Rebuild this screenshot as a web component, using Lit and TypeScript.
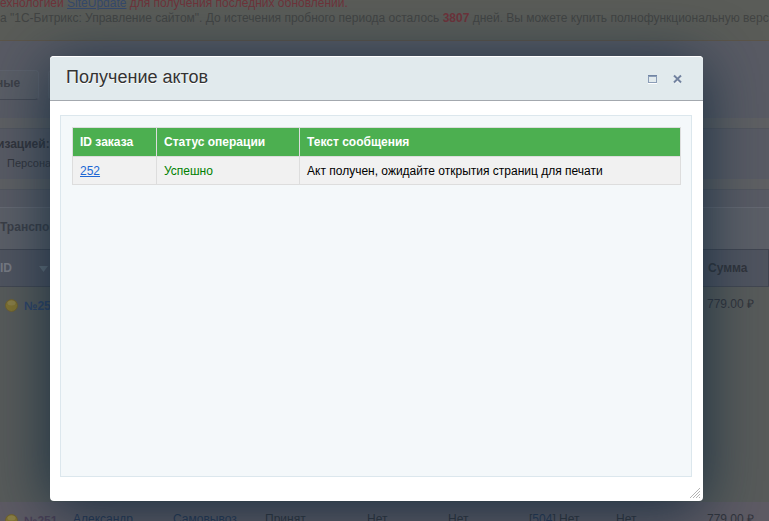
import { LitElement, html, css } from "lit";
import { customElement } from "lit/decorators.js";

interface Act {
  id: string;
  status: string;
  message: string;
}

@customElement("acts-dialog")
class ActsDialog extends LitElement {
  static styles = css`
    :host {
      display: flex;
      flex-direction: column;
      box-sizing: border-box;
      border-radius: 4px;
      background: #fff;
      box-shadow: 0 8px 60px rgba(16, 40, 60, 0.9);
      position: relative;
      font: 12px/14px "Liberation Sans", Arial, sans-serif;
      color: #000;
    }
    .head {
      display: flex;
      align-items: center;
      height: 43px;
      padding: 0 20px 0 16px;
      background: #e1eaed;
      border-top: 1px solid #fff;
      border-bottom: 1px solid #a3a8ae;
      border-radius: 4px 4px 0 0;
    }
    h1 {
      flex: 1;
      margin: 0 0 4px;
      font: 18px/22px "Liberation Sans", Arial, sans-serif;
      color: #333;
      text-shadow: 0 1px #fff;
    }
    .tool {
      display: grid;
      width: 10px;
      height: 10px;
      margin-left: 15px;
      padding: 0;
      border: 0;
      background: none;
    }
    .body {
      flex: 1;
      display: flex;
      padding: 14px 11px 24px 10px;
    }
    .panel {
      flex: 1;
      padding: 11px 10px 11px 11px;
      background: #f4f8fa;
      border: 1px solid #dce7ed;
    }
    table {
      width: 100%;
      border-collapse: collapse;
      table-layout: fixed;
    }
    th,
    td {
      padding: 0 7px;
      border: 1px solid #ddd;
      text-align: left;
    }
    th {
      height: 28px;
      background: #4caf50;
      color: #fff;
    }
    td {
      height: 27px;
      background: #f1f1f1;
    }
    .c-id {
      width: 84px;
      box-sizing: border-box;
    }
    .c-status {
      width: 143px;
      box-sizing: border-box;
    }
    a {
      color: #2067d4;
    }
    .ok {
      color: #008000;
    }
    .grip {
      position: absolute;
      right: 3px;
      bottom: 3px;
    }
  `;

  acts: Act[] = [
    { id: "252", status: "Успешно", message: "Акт получен, ожидайте открытия страниц для печати" },
  ];

  render() {
    return html`
      <header class="head">
        <h1>Получение актов</h1>
        <button class="tool" aria-label="Развернуть">
          <svg width="10" height="10" viewBox="0 0 10 10" shape-rendering="crispEdges">
            <path d="M0 9h9v1H0z" fill="#fff" />
            <path d="M0 1h9v8H0zM1 3v5h7V3z" fill="#8b9db7" fill-rule="evenodd" />
            <path d="M0 1h9v1H0z" fill="#7185a4" />
          </svg>
        </button>
        <button class="tool" aria-label="Закрыть">
          <svg width="10" height="10" viewBox="0 0 10 10">
            <path d="M1.5 2.5l6 6.5M7.500 2.500l-6 6.500" stroke="#fff" stroke-width="2" />
            <path d="M1 1.500l7 7M8 1.500l-7 7" stroke="#71829f" stroke-width="2" />
          </svg>
        </button>
      </header>
      <div class="body">
        <div class="panel">
          <table>
            <thead>
              <tr>
                <th class="c-id">ID заказа</th>
                <th class="c-status">Статус операции</th>
                <th>Текст сообщения</th>
              </tr>
            </thead>
            <tbody>
              ${this.acts.map(
                (a) => html`<tr>
                  <td><a href="#">${a.id}</a></td>
                  <td class="ok">${a.status}</td>
                  <td>${a.message}</td>
                </tr>`
              )}
            </tbody>
          </table>
        </div>
      </div>
      <svg class="grip" width="10" height="10" viewBox="0 0 10 10">
        <path d="M0 10L10 0M3 10l7-7M6 10l4-4M9 10l1-1" stroke="#b4b4b4" stroke-width="1" />
      </svg>
    `;
  }
}

@customElement("app-root")
class AppRoot extends LitElement {
  static styles = css`
    :host {
      display: block;
      position: relative;
      height: 100vh;
      overflow: hidden;
      background: #595b64;
      font: 12px/15px "Liberation Sans", Arial, sans-serif;
      color: #32343b;
    }
    .notice {
      height: 45px;
      margin-top: -4px;
      box-sizing: border-box;
      background: #5a5c58;
      border-bottom: 1px solid #5c5549;
      color: #424443;
      white-space: nowrap;
      overflow: hidden;
    }
    .notice p {
      margin: 0;
    }
    .warn {
      color: #6e333a;
    }
    .notice a {
      color: #35496b;
    }
    .tabs {
      display: flex;
      gap: 9px;
      padding: 29px 0 18px;
    }
    .tab {
      height: 30px;
      box-sizing: border-box;
      margin-left: -4px;
      padding: 0 18px 4px 0;
      border: 1px solid #5f636d;
      border-left: 0;
      border-bottom-color: #474a54;
      border-radius: 0 4px 4px 0;
      background: #5b5e66;
      color: #3d3f46;
      font: bold 12px/15px "Liberation Sans", Arial, sans-serif;
    }
    .tab.next {
      width: 90px;
      margin-left: 0;
      border-left: 1px solid #5f636d;
      border-radius: 4px;
    }
    .band {
      height: 10px;
      background: #5f6063;
      border-bottom: 1px solid #53565e;
    }
    .filter {
      height: 50px;
      box-sizing: border-box;
      padding-top: 8px;
    }
    .filter h2 {
      margin: 0 0 4px -3px;
      font: bold 12px/15px "Liberation Sans", Arial, sans-serif;
    }
    .filter label {
      display: flex;
      align-items: center;
      gap: 7px;
      font-size: 11px;
    }
    .filter input {
      appearance: none;
      width: 13px;
      height: 13px;
      margin: 0 0 0 -13px;
      border: 1px solid #4d5059;
      border-radius: 2px;
    }
    .bar {
      height: 42px;
      box-sizing: border-box;
      margin-top: 17px;
      padding-top: 12px;
      border-top: 1px solid #666972;
      background: #5c5f67;
      color: #3b3e46;
      font-weight: bold;
    }
    .orders {
      width: 100%;
      border-collapse: collapse;
      table-layout: fixed;
      white-space: nowrap;
    }
    .orders th,
    .orders td {
      padding: 0;
      text-align: left;
      vertical-align: top;
    }
    .orders th {
      height: 36px;
      background: #50545f;
      border-top: 1px solid #414550;
      border-bottom: 1px solid #434751;
      vertical-align: middle;
      font-weight: bold;
    }
    .orders .id-head {
      color: #787b83;
    }
    .sort {
      margin-left: 27px;
    }
    .orders .last {
      padding-left: 1px;
      border-right: 1px solid #414550;
    }
    .orders td {
      height: 197px;
      padding-top: 10px;
      padding-bottom: 8px;
    }
    .first td {
      background: #585b5a;
    }
    .second td {
      background: #5e5b64;
    }
    .num {
      display: flex;
      align-items: center;
      gap: 6px;
      padding-left: 5px;
    }
    .num a {
      color: #2f4468;
      font-weight: bold;
      text-decoration: none;
      padding-top: 2px;
    }
    .second .num a {
      color: #4b4055;
    }
    .orders .link {
      color: #283854;
      text-decoration: none;
    }
    .w-id { width: 73px; }
    .w-name { width: 100px; }
    .w-ship { width: 92px; }
    .w-state { width: 102px; }
    .w-flag { width: 81px; }
    .w-pay { width: 87px; }
    .w-sys { width: 91px; }
    .layer {
      position: absolute;
      inset: 0;
      display: grid;
      padding: 56px 66px 20px 50px;
    }
  `;

  lamp() {
    return html`<svg width="13" height="13" viewBox="0 0 13 13">
      <circle cx="6.5" cy="6.5" r="6" fill="#80722f" stroke="#6e6031" />
      <ellipse cx="6.5" cy="4" rx="4" ry="2.5" fill="#8a7e45" />
    </svg>`;
  }

  render() {
    return html`
      <div class="notice">
        <p class="warn">ехнологией <a href="#">SiteUpdate</a> для получения последних обновлений.</p>
        <p>
          а "1С-Битрикс: Управление сайтом". До истечения пробного периода осталось
          <b class="warn">3807</b> дней. Вы можете купить полнофункциональную версию продукта
        </p>
      </div>
      <nav class="tabs">
        <button class="tab">ные</button>
        <button class="tab next" aria-label="Вкладка"></button>
      </nav>
      <div class="band"></div>
      <section class="filter">
        <h2>изацией:</h2>
        <label><input type="checkbox" />Персона</label>
      </section>
      <div class="band"></div>
      <div class="bar">Транспорт</div>
      <table class="orders">
        <colgroup>
          <col class="w-id" /><col class="w-name" /><col class="w-ship" /><col class="w-state" />
          <col class="w-flag" /><col class="w-flag" /><col class="w-pay" /><col class="w-sys" /><col />
        </colgroup>
        <thead>
          <tr>
            <th class="id-head">
              ID<svg class="sort" width="9" height="6" viewBox="0 0 9 6"><path d="M0 0h9L4.500 6z" fill="#68727c" /></svg>
            </th>
            <th colspan="7"></th>
            <th class="last">Сумма</th>
          </tr>
        </thead>
        <tbody>
          <tr class="first">
            <td><div class="num">${this.lamp()}<a href="#">№252</a></div></td>
            <td colspan="7"></td>
            <td>779.00 ₽</td>
          </tr>
          <tr class="second">
            <td><div class="num">${this.lamp()}<a href="#">№251</a></div></td>
            <td><a class="link" href="#">Александр</a></td>
            <td><a class="link" href="#">Самовывоз</a></td>
            <td>Принят</td>
            <td>Нет</td>
            <td>Нет</td>
            <td>[<a class="link" href="#">504</a>] Нет</td>
            <td>Нет</td>
            <td>779.00 ₽</td>
          </tr>
        </tbody>
      </table>
      <div class="layer"><acts-dialog role="dialog" aria-label="Получение актов"></acts-dialog></div>
    `;
  }
}
